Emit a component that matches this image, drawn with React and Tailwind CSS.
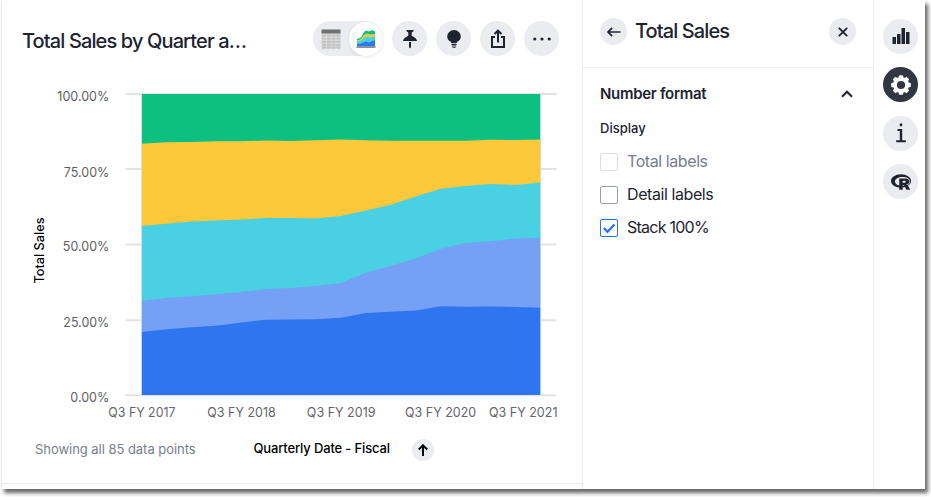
import React from "react";
import { FaRProject } from "react-icons/fa";

const STEP = 24.94;
const LEFT = 141.5;

const series = [
  { color: "#0dc081", tops: Array(17).fill(94) },
  {
    color: "#fdc83a",
    tops: [143.7, 142.3, 141.9, 141.3, 141.3, 140.5, 141, 140.3, 139.6, 140.3, 140.8, 140.7, 140.7, 140.7, 139.8, 140, 139.4],
  },
  {
    color: "#49d0e2",
    tops: [225.9, 223.7, 221.5, 220.4, 219.4, 218.1, 218.1, 218.4, 216, 210.4, 204.8, 196.5, 188.8, 186, 184.1, 185, 182.5],
  },
  {
    color: "#74a0f5",
    tops: [301, 298, 296.3, 294.3, 292, 289, 288, 286, 283, 272.7, 265.8, 258.4, 248.7, 243, 241.3, 238.5, 237.8],
  },
  {
    color: "#2f75f0",
    tops: [332, 329.3, 327.3, 325.7, 322.5, 319.7, 319.4, 319.3, 317.8, 313, 311.7, 310.4, 306.3, 306.8, 306.5, 306.9, 307.7],
  },
];

const yLabels = [
  { text: "100.00%", y: 101, line: 94, width: 52 },
  { text: "75.00%", y: 176.7, line: 169, width: 45.5 },
  { text: "50.00%", y: 250.7, line: 244.5, width: 46.5 },
  { text: "25.00%", y: 327, line: 320.3, width: 46 },
  { text: "0.00%", y: 401.7, line: 395.2, width: 39 },
];

const xLabels = [
  { text: "Q3 FY 2017", x: 108.3, width: 67.2 },
  { text: "Q3 FY 2018", x: 207.3, width: 68.4 },
  { text: "Q3 FY 2019", x: 306.8, width: 68.7 },
  { text: "Q3 FY 2020", x: 405, width: 71.2 },
  { text: "Q3 FY 2021", x: 489, width: 68.5 },
];

function area(tops) {
  const points = tops.map((y, i) => `${(LEFT + i * STEP).toFixed(2)},${y}`);
  return `M${points.join("L")}L540.5,395L141.5,395Z`;
}

function Chart() {
  return (
    <svg className="block h-[345px] w-[580px] shrink-0" viewBox="2 78 580 345" fontFamily="Inter, sans-serif">
      {yLabels.map((l) => (
        <g key={l.text}>
          <line x1="125.5" x2="556.5" y1={l.line} y2={l.line} stroke="#e3e3e5" strokeWidth="2" />
          <text x={109.3 - l.width} y={l.y} fontSize="13.5" fill="#5e5e60" textLength={l.width} lengthAdjust="spacingAndGlyphs">
            {l.text}
          </text>
        </g>
      ))}
      {series.map((s) => (
        <path key={s.color} d={area(s.tops)} fill={s.color} />
      ))}
      <path d="M141.5 94V396M540.7 94V396" stroke="#dfe3ec" strokeOpacity=".8" />
      {xLabels.map((l) => (
        <text key={l.text} x={l.x} y="417" fontSize="13.5" fill="#66666a" textLength={l.width} lengthAdjust="spacingAndGlyphs">
          {l.text}
        </text>
      ))}
      <text
        transform="translate(43.8 283.5) rotate(-90)"
        fontSize="12.5"
        fontWeight="550"
        fill="#000"
        textLength="66"
        lengthAdjust="spacingAndGlyphs"
      >
        Total Sales
      </text>
    </svg>
  );
}

function Round({ children, dark }) {
  return (
    <button
      className={
        dark
          ? "flex size-[35px] shrink-0 items-center justify-center rounded-full bg-[#313640] text-white"
          : "flex size-[35px] shrink-0 items-center justify-center rounded-full bg-[#eaecf0] text-[#1d232f]"
      }
    >
      {children}
    </button>
  );
}

function TableIcon() {
  return (
    <svg width="20" height="20" viewBox="0 0 20 20">
      <rect x=".5" y=".5" width="19" height="19" fill="#dcdcdc" />
      <rect x=".5" y=".5" width="19" height="4" fill="#707070" />
      {[5.5, 8.6, 11.7, 14.8, 17.6].map((y) =>
        [1, 5.8, 10.6, 15.4].map((x) => <rect key={`${x}-${y}`} x={x} y={y} width="3.9" height="2.1" fill="#c2c2c2" />)
      )}
    </svg>
  );
}

function AreaIcon() {
  return (
    <svg width="20" height="20" viewBox="0 0 20 20">
      <path d="M1 17V10L5 8.5L8 3L10 1.5L13 2.5L16 1L19 2.5V17Z" fill="#0dc081" />
      <path d="M1 17V11.5L5 10L8 6L11 4.5L14 5.5L19 5V17Z" fill="#fdc83a" />
      <path d="M1 17V12L5 11.5L9 8L12 7.5L15 8.5L19 7V17Z" fill="#49d0e2" />
      <path d="M1 17V15L5 14.5L10 12.5L13 13.5L19 11V17Z" fill="#2f75f0" />
      <rect x=".5" y="17" width="19" height="2" fill="#8e949e" />
    </svg>
  );
}

function Toolbar() {
  return (
    <div className="flex items-center gap-[9px]">
      <div className="flex h-[35px] w-[70px] items-center justify-between rounded-full bg-[#eaecf0] pl-2">
        <TableIcon />
        <span className="flex size-[34px] items-center justify-center rounded-full bg-white shadow-[0_1px_3px_rgba(40,50,70,0.12)]">
          <AreaIcon />
        </span>
      </div>
      <Round>
        <svg width="20" height="20" viewBox="0 0 20 20" fill="currentColor">
          <path d="M6.5 1H13.5V2.2L11.7 3.5V6.7L14.7 8.6Q16.8 10 17 12H3Q3.2 10 5.3 8.6L8.3 6.7V3.5L6.5 2.2ZM9 13H11V18L10 19.5L9 18Z" />
        </svg>
      </Round>
      <Round>
        <svg width="20" height="20" viewBox="0 0 20 20" fill="currentColor">
          <path d="M10 1A6.8 6.3 0 0 1 16.8 7.4C16.8 9.8 15.5 11.3 13.5 12.6L12.5 14H7.5L6.5 12.6C4.5 11.3 3.2 9.8 3.2 7.4A6.8 6.3 0 0 1 10 1Z" />
          <path d="M7.5 14.8H12.5V16H7.5ZM7.8 16.6H12.2V17.4H7.8ZM8.5 18.2H11.5V19H8.5Z" />
        </svg>
      </Round>
      <Round>
        <svg width="20" height="20" viewBox="0 0 20 20" fill="none" stroke="currentColor" strokeWidth="2">
          <path d="M7 8H4V18H16V8H13M10 13.5V2M6.5 5L10 1.7L13.5 5" />
        </svg>
      </Round>
      <Round>
        <svg width="20" height="20" viewBox="0 0 20 20" fill="currentColor">
          <circle cx="2.8" cy="10" r="1.6" />
          <circle cx="10" cy="10" r="1.6" />
          <circle cx="17.2" cy="10" r="1.6" />
        </svg>
      </Round>
    </div>
  );
}

function Check({ label, checked, disabled, tight }) {
  let box = "border-[#99a0ad]";
  if (checked) box = "border-[#2770ef]";
  if (disabled) box = "border-[#dbdfe7]";
  return (
    <label className="flex h-[33px] items-center gap-[9px]">
      <span className={`flex size-[18px] items-center justify-center rounded-[2px] border bg-white ${box}`}>
        {checked && (
          <svg width="16" height="16" viewBox="0 0 16 16" fill="none" stroke="#2770ef" strokeWidth="2.2">
            <path d="M2.8 8L6.5 11.8L13.4 4.6" />
          </svg>
        )}
      </span>
      <span
        className={`pb-px text-base leading-5 ${tight ? "tracking-[-0.75px]" : "tracking-[-0.42px]"} ${
          disabled ? "text-[#777e8b]" : "text-[#1d232f]"
        }`}
      >
        {label}
      </span>
    </label>
  );
}

function Settings() {
  return (
    <section className="flex w-[291px] shrink-0 flex-col border-r border-[#eaedf2]">
      <header className="flex h-[68px] shrink-0 items-center border-b border-[#eaedf2] pr-[17px] pb-1 pl-[17px]">
        <button className="flex size-[27px] items-center justify-center rounded-full bg-[#eaecf0]">
          <svg width="16" height="16" viewBox="0 0 16 16" fill="none" stroke="#1d232f" strokeWidth="1.7">
            <path d="M14.5 8H2.2M6.2 3.8L2 8L6.2 12.2" />
          </svg>
        </button>
        <h2 className="ml-2 flex-1 pb-0.5 text-xl leading-6 font-[450] tracking-[-0.9px] text-[#1d232f]">Total Sales</h2>
        <button className="flex size-[27px] items-center justify-center rounded-full bg-[#eaecf0]">
          <svg width="12" height="12" viewBox="0 0 12 12" fill="none" stroke="#1d232f" strokeWidth="1.8">
            <path d="M1.8 1.8L10.2 10.2M10.2 1.8L1.8 10.2" />
          </svg>
        </button>
      </header>
      <div className="flex flex-col pr-5 pl-[17px]">
        <div className="flex h-[52px] items-center justify-between">
          <h3 className="text-[15px] font-semibold tracking-[-0.3px] text-[#1d232f]">Number format</h3>
          <svg width="12" height="12" viewBox="0 0 12 12" fill="none" stroke="#1d232f" strokeWidth="2">
            <path d="M1 8.7L6 3.7L11 8.7" />
          </svg>
        </div>
        <p className="mb-2 h-[17px] text-[13px] leading-4 font-[450] text-[#1d232f]">Display</p>
        <Check label="Total labels" disabled />
        <Check label="Detail labels" />
        <Check label="Stack 100%" checked tight />
      </div>
    </section>
  );
}

function Rail() {
  return (
    <nav className="flex flex-1 flex-col items-center gap-[13.5px] pt-[18.5px] pl-0.5">
      <Round>
        <svg width="18" height="16" viewBox="0 0 18 16" fill="currentColor">
          <path d="M0.5 9H4V16H0.5ZM5 6H8.5V16H5ZM9.5 0H13V16H9.5ZM14 4H17.5V16H14Z" />
        </svg>
      </Round>
      <Round dark>
        <svg width="20" height="20" viewBox="0 0 20 20">
          <g fill="currentColor">
            <circle cx="10" cy="10" r="8" />
            {[0, 45, 90, 135].map((a) => (
              <rect key={a} x="7.8" y=".2" width="4.4" height="19.6" rx="1" transform={`rotate(${a} 10 10)`} />
            ))}
          </g>
          <circle cx="10" cy="10" r="4.1" fill="#313640" />
        </svg>
      </Round>
      <Round>
        <svg width="12" height="20" viewBox="0 0 12 20" fill="currentColor">
          <path d="M4.8 .5H7.2V3.3H4.8ZM2.5 6H7.2V17.3H10.8V19.2H1.2V17.3H4.8V7.9H2.5Z" />
        </svg>
      </Round>
      <Round>
        <FaRProject size={20} />
      </Round>
    </nav>
  );
}

export default function App() {
  return (
    <div className="h-[497px] w-[931px] overflow-hidden bg-white pl-px font-['Inter',sans-serif]">
      <div className="flex h-[489px] w-[924px] bg-white shadow-[3px_4px_4px_0px_rgba(0,0,0,0.6)]">
        <main className="flex w-[582px] shrink-0 flex-col border-x border-[#eaedf2]">
          <header className="flex h-[78px] shrink-0 items-center justify-between pr-[23px] pb-px pl-5">
            <h1 className="pt-1 text-xl leading-6 font-[450] tracking-[-0.88px] whitespace-nowrap text-[#1d232f]">
              Total Sales by Quarter a<span className="tracking-normal">…</span>
            </h1>
            <Toolbar />
          </header>
          <Chart />
          <footer className="flex h-[61px] shrink-0 items-center border-b border-[#eaedf2] pb-[7px] pl-[33px] text-[13px]">
            <span className="w-[218.5px] pt-px tracking-[-0.04px] whitespace-nowrap text-[#777e8b]">Showing all 85 data points</span>
            <span className="w-[158.5px] pb-0.5 font-medium tracking-[-0.15px] whitespace-nowrap text-black">Quarterly Date - Fiscal</span>
            <button className="flex size-[22px] items-center justify-center rounded-full bg-[#eaecf0]">
              <svg width="12" height="12" viewBox="0 0 12 12" fill="none" stroke="#000" strokeWidth="2">
                <path d="M6 12V1.5M1.8 5.5L6 1.3L10.2 5.5" />
              </svg>
            </button>
          </footer>
        </main>
        <Settings />
        <Rail />
      </div>
    </div>
  );
}
